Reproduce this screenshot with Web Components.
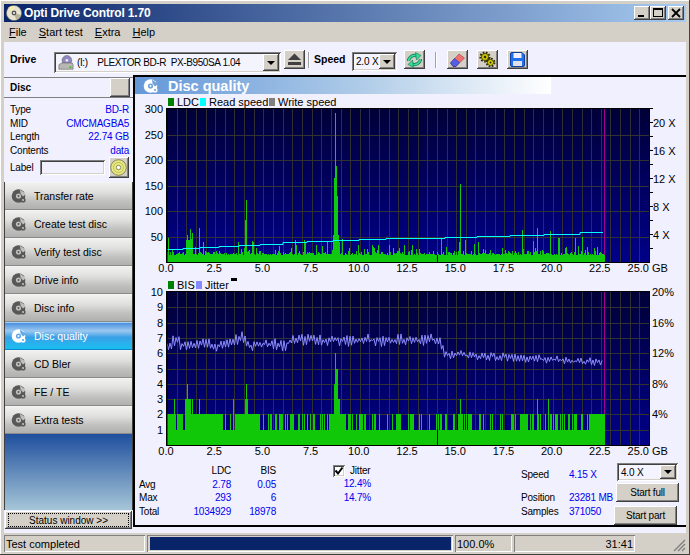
<!DOCTYPE html>
<html>
<head>
<meta charset="utf-8">
<title>Opti Drive Control</title>
<style>
  html, body { margin: 0; padding: 0; background: #d4d0c8; }
  body { font: 11px "Liberation Sans", Arial, sans-serif; color: #000; }
</style>
</head>
<body>
<odc-window>
  <odc-titlebar slot="title">Opti Drive Control 1.70</odc-titlebar>
  <odc-menubar slot="menu"></odc-menubar>
  <odc-toolbar slot="tools"></odc-toolbar>
  <odc-sidebar slot="side"></odc-sidebar>
  <odc-quality slot="main"></odc-quality>
  <odc-statusbar slot="status"></odc-statusbar>
</odc-window>

<script>
const BEVEL = "box-shadow: inset -1px -1px #404040, inset 1px 1px #fff, inset -2px -2px #808080, inset 2px 2px #d4d0c8;"
const SUNKEN = "box-shadow: inset 1px 1px #808080, inset -1px -1px #fff, inset 2px 2px #404040, inset -2px -2px #d4d0c8;"
const UI_FONT = `"Liberation Sans", Arial, sans-serif`

// disc with a bite taken out, used by the nav buttons and the header
const discIcon = (fill, hole) => `
  <svg width="16" height="16" viewBox="0 0 16 16">
    <circle cx="7.5" cy="8" r="6.8" fill="${fill}"/>
    <circle cx="7.5" cy="8" r="2.6" fill="${hole}"/>
    <circle cx="7.5" cy="8" r="1" fill="${fill}"/>
    <path d="M9 1.5 L15 6 L12 8.5 L9.5 5.5Z" fill="${hole}"/>
    <circle cx="12" cy="12" r="2.6" fill="${fill}"/>
    <circle cx="12" cy="12" r="1.1" fill="${hole}"/>
  </svg>`

function rng(seed) {
  return () => {
    seed = (seed + 0x6D2B79F5) | 0
    let t = Math.imul(seed ^ (seed >>> 15), 1 | seed)
    t = (t + Math.imul(t ^ (t >>> 7), 61 | t)) ^ t
    return ((t ^ (t >>> 14)) >>> 0) / 4294967296
  }
}

class OdcWindow extends HTMLElement {
  constructor() {
    super()
    this.attachShadow({mode: "open"})
    this.shadowRoot.innerHTML = `
      <style>
        :host {
          display: flex;
          flex-direction: column;
          box-sizing: border-box;
          width: 690px;
          height: 555px;
          padding: 4px 4px 3px;
          background: #d4d0c8;
          box-shadow: inset -1px -1px #404040, inset 1px 1px #fff;
          overflow: hidden;
        }
        .body { display: flex; height: 458px; background: #f0f0ff; }
      </style>
      <slot name="title"></slot>
      <slot name="menu"></slot>
      <slot name="tools"></slot>
      <div class="body">
        <slot name="side"></slot>
        <slot name="main"></slot>
      </div>
      <slot name="status"></slot>
    `
  }
}

class OdcTitlebar extends HTMLElement {
  constructor() {
    super()
    this.attachShadow({mode: "open"})
    this.shadowRoot.innerHTML = `
      <style>
        :host {
          display: flex;
          align-items: center;
          height: 18px;
          padding: 0 2px;
          background: linear-gradient(90deg, #0a246a, #a6caf0);
          color: #fff;
          font: bold 12px ${UI_FONT};
          letter-spacing: -.15px;
        }
        svg.app { margin-right: 2px; }
        .text { flex: 1; white-space: nowrap; }
        .btn {
          width: 16px; height: 14px;
          background: #d4d0c8;
          ${BEVEL}
          display: flex;
        }
        .btn:last-child { margin-left: 2px; }
        .btn svg { display: block; }
      </style>
      <svg class="app" width="16" height="16" viewBox="0 0 16 16">
        <circle cx="8" cy="8" r="7.6" fill="#e8e4d0" stroke="#6a6a60" stroke-width=".6"/>
        <path d="M8 8 L2 3 A7 7 0 0 1 8 1Z" fill="#f4efb0"/>
        <path d="M8 8 L15 10 A7 7 0 0 1 10 14.6Z" fill="#b8b49c"/>
        <circle cx="8" cy="8" r="2.4" fill="#555"/>
        <circle cx="8" cy="8" r="1" fill="#fff"/>
      </svg>
      <span class="text"><slot></slot></span>
      <span class="btn"><svg width="16" height="14"><rect x="4" y="9" width="6" height="2" fill="#000"/></svg></span>
      <span class="btn"><svg width="16" height="14"><rect x="3.5" y="2.5" width="9" height="8" fill="none" stroke="#000"/><rect x="3" y="2" width="10" height="2" fill="#000"/></svg></span>
      <span class="btn"><svg width="16" height="14"><path d="M4 3 L12 11 M12 3 L4 11" stroke="#000" stroke-width="1.8"/></svg></span>
    `
  }
}

class OdcMenubar extends HTMLElement {
  constructor() {
    super()
    this.attachShadow({mode: "open"})
    const items = [["F", "ile"], ["S", "tart test"], ["E", "xtra"], ["H", "elp"]]
    this.shadowRoot.innerHTML = `
      <style>
        :host {
          display: flex;
          gap: 12px;
          align-items: center;
          height: 20px;
          padding-left: 5px;
          font: 11px ${UI_FONT};
          background: #d4d0c8;
        }
      </style>
      ${items.map(([a, b]) => `<span><u>${a}</u>${b}</span>`).join("")}
    `
  }
}

class OdcCombo extends HTMLElement {
  constructor() {
    super()
    this.attachShadow({mode: "open"})
    this.shadowRoot.innerHTML = `
      <style>
        :host {
          display: flex;
          box-sizing: border-box;
          align-items: center;
          padding: 2px;
          background: #f4f4ff;
          ${SUNKEN}
          font: 10px ${UI_FONT};
          letter-spacing: -.2px;
        }
        .val { flex: 1; display: flex; align-items: center; padding-left: 2px; white-space: nowrap; overflow: hidden; }
        .arrow {
          width: 16px; align-self: stretch;
          background: #d4d0c8; ${BEVEL}
          display: flex; align-items: center; justify-content: center;
        }
        .arrow i { border: 4px solid transparent; border-top-color: #000; border-bottom: 0; }
      </style>
      <span class="val"><slot></slot></span>
      <span class="arrow"><i></i></span>
    `
  }
}

class OdcToolbar extends HTMLElement {
  constructor() {
    super()
    this.attachShadow({mode: "open"})
    this.shadowRoot.innerHTML = `
      <style>
        :host {
          display: flex;
          align-items: flex-start;
          height: 33px;
          padding-left: 6px;
          background: #f0f0ff;
          font: bold 10.5px ${UI_FONT};
        }
        b { display: block; margin-top: 11px; }
        .tb {
          width: 21px; height: 19px;
          margin-top: 8px;
          background: #d4d0c8;
          ${BEVEL}
          display: flex; align-items: center; justify-content: center;
        }
        .sep { width: 1px; height: 16px; margin-top: 10px; background: #a0a0a0; box-shadow: 1px 0 #fff; }
        odc-combo { margin-top: 10px; height: 21px; font-weight: normal; }
        .drive { width: 227px; margin-left: 15px; }
        .speed { width: 45px; height: 19px; margin-left: 8px; }
        .drive svg { margin-right: 3px; flex: none; }
        .dtext { white-space: pre; letter-spacing: -.4px; }
      </style>
      <b style="width:29px">Drive</b>
      <odc-combo class="drive">
        <svg width="16" height="16" viewBox="0 0 18 18">
          <circle cx="10" cy="6" r="5.5" fill="#9088c0" stroke="#555" stroke-width=".5"/>
          <circle cx="10" cy="6" r="1.5" fill="#eee"/>
          <path d="M1 11 L4 9 H16 L17 11 V16 H1Z" fill="#b8b8b0" stroke="#555" stroke-width=".6"/>
          <rect x="13" y="13" width="2" height="1.5" fill="#20b020"/>
        </svg>
        <span class="dtext">(I:)    PLEXTOR BD-R  PX-B950SA 1.04</span>
      </odc-combo>
      <span class="tb" style="margin-left:3px">
        <svg width="15" height="13" viewBox="0 0 15 13"><path d="M7.5 .5 L14 7 H1Z" fill="#404040"/><rect x="1" y="9" width="13" height="3" fill="#404040"/></svg>
      </span>
      <span class="sep" style="margin-left:3px"></span>
      <b style="margin-left:5px;width:30px">Speed</b>
      <odc-combo class="speed">2.0 X</odc-combo>
      <span class="tb" style="margin-left:7px">
        <svg width="17" height="16" viewBox="0 0 17 16">
          <path d="M2.5 9 A6 6 0 0 1 11 4" fill="none" stroke="#0e7a50" stroke-width="3.2"/>
          <path d="M2.5 9 A6 6 0 0 1 11 4" fill="none" stroke="#3ad89a" stroke-width="1.8"/>
          <path d="M9.5 .5 L15 3.5 L10.5 8Z" fill="#3ad89a" stroke="#0e7a50" stroke-width=".6"/>
          <path d="M14.5 7 A6 6 0 0 1 6 12" fill="none" stroke="#0e7a50" stroke-width="3.2"/>
          <path d="M14.5 7 A6 6 0 0 1 6 12" fill="none" stroke="#3ad89a" stroke-width="1.8"/>
          <path d="M7.5 15.5 L2 12.5 L6.5 8Z" fill="#3ad89a" stroke="#0e7a50" stroke-width=".6"/>
        </svg>
      </span>
      <span class="sep" style="margin-left:10px"></span>
      <span class="tb" style="margin-left:11px">
        <svg width="17" height="17" viewBox="0 0 17 17">
          <path d="M1.5 12 L10 3 L15.5 7 L7 15.5 L4 15.5Z" fill="#f07070" stroke="#803030" stroke-width=".5"/>
          <path d="M1.5 12 L5.5 7.5 L10.5 11.5 L7 15.5 L4 15.5Z" fill="#5060e8" stroke="#202080" stroke-width=".5"/>
        </svg>
      </span>
      <span class="tb" style="margin-left:9px">
        <svg width="17" height="17" viewBox="0 0 17 17">
          <circle cx="6" cy="6" r="4.4" fill="none" stroke="#2c2c00" stroke-width="2.4" stroke-dasharray="1.6 1.4"/>
          <circle cx="6" cy="6" r="3.6" fill="#c8c000" stroke="#2c2c00" stroke-width=".7"/>
          <circle cx="6" cy="6" r="1.2" fill="#2c2c00"/>
          <circle cx="11.5" cy="11.5" r="3.8" fill="none" stroke="#2c2c00" stroke-width="2.2" stroke-dasharray="1.6 1.4"/>
          <circle cx="11.5" cy="11.5" r="3" fill="#dcd400" stroke="#2c2c00" stroke-width=".7"/>
          <circle cx="11.5" cy="11.5" r="1" fill="#2c2c00"/>
        </svg>
      </span>
      <span class="tb" style="margin-left:9px">
        <svg width="15" height="15" viewBox="0 0 15 15">
          <path d="M.5 2 Q.5 .5 2 .5 H12 L14.5 3 V13 Q14.5 14.5 13 14.5 H2 Q.5 14.5 .5 13Z" fill="#2070f0" stroke="#1040a0"/>
          <rect x="3.5" y="1" width="8" height="5" fill="#f0f0ff"/>
          <rect x="3" y="9" width="9" height="5" fill="#e0e0e8"/>
        </svg>
      </span>
    `
  }
}

class OdcNavButton extends HTMLElement {
  constructor() {
    super()
    this.attachShadow({mode: "open"})
    const on = this.hasAttribute("active")
    this.shadowRoot.innerHTML = `
      <style>
        :host {
          display: flex;
          align-items: center;
          box-sizing: border-box;
          height: 28px;
          padding-left: 6px;
          gap: 7px;
          border-top: 1px solid ${on ? "#a0d0f8" : "#f4f4f4"};
          border-bottom: 1px solid ${on ? "#1080d0" : "#8a8a8a"};
          background: ${on
            ? "linear-gradient(#4a8fe0, #9cc8f0 30%, #3aa0e8 55%, #18c0f0)"
            : "linear-gradient(#f0f0ee, #e0e0de 35%, #c0c0be 70%, #b0b0ae)"};
          color: ${on ? "#fff" : "#000"};
          font: 10.5px ${UI_FONT};
        }
        svg { display: block; }
      </style>
      ${discIcon(on ? "#fff" : "#585858", on ? "#60a8e8" : "#c0c0be")}
      <span><slot></slot></span>
    `
  }
}

class OdcSidebar extends HTMLElement {
  constructor() {
    super()
    this.attachShadow({mode: "open"})
    const rows = [["Type", "BD-R"], ["MID", "CMCMAGBA5"], ["Length", "22.74 GB"], ["Contents", "data"]]
    const nav = ["Transfer rate", "Create test disc", "Verify test disc", "Drive info", "Disc info", "Disc quality", "CD Bler", "FE / TE", "Extra tests"]
    this.shadowRoot.innerHTML = `
      <style>
        :host {
          display: flex;
          flex-direction: column;
          width: 129px;
          padding-top: 2px;
          box-sizing: border-box;
          background: #f0f0ff;
          font: 10px ${UI_FONT};
        }
        .head {
          display: flex; justify-content: space-between; align-items: center;
          height: 21px; flex: none; box-sizing: border-box;
          border-top: 1px solid #808080;
          border-bottom: 1px solid #808080;
          padding-left: 6px;
          font-weight: bold;
        }
        .head span { width: 20px; height: 19px; margin-right: 3px; background: #d4d0c8; ${BEVEL} }
        .info { height: 84px; flex: none; box-sizing: border-box; padding: 5px 4px 0 6px; letter-spacing: -.2px; }
        .row { display: flex; justify-content: space-between; height: 13.5px; line-height: 13.5px; }
        .row em { font-style: normal; color: #0000f0; }
        .label { display: flex; align-items: center; }
        .label i { width: 67px; height: 15px; margin-left: 7px; box-sizing: border-box; background: #f0f0ff; ${SUNKEN} }
        .label span { width: 21px; height: 21px; margin-left: 4px; background: #d4d0c8; ${BEVEL} display: flex; align-items: center; justify-content: center; }
        .nav { border-left: 1px solid #404040; border-right: 1px solid #404040; flex: none; }
        .fill {
          height: 76px; flex: none;
          border-left: 1px solid #404040; border-right: 1px solid #404040;
          background: linear-gradient(#1f4f9e, #a6c6d8);
        }
        .status {
          height: 18px; flex: none; box-sizing: border-box;
          margin: 1px 1px 0;
          background: #d4d0c8; ${BEVEL}
          display: flex; align-items: center; justify-content: center;
          position: relative;
        }
        .status::after { content: ""; position: absolute; inset: 2px 3px; border: 1px dotted #000; }
      </style>
      <div class="head">Disc<span></span></div>
      <div class="info">
        ${rows.map(([a, b]) => `<div class="row"><span>${a}</span><em>${b}</em></div>`).join("")}
        <div class="label">Label<i></i><span>
          <svg width="17" height="17" viewBox="0 0 17 17">
            <circle cx="8.5" cy="8.5" r="7.8" fill="#e8e880" stroke="#606030" stroke-width=".7"/>
            <circle cx="8.5" cy="8.5" r="5" fill="none" stroke="#c0c060"/>
            <circle cx="8.5" cy="8.5" r="2.2" fill="#fff" stroke="#606030" stroke-width=".7"/>
          </svg></span></div>
      </div>
      <div class="nav">
        ${nav.map(n => `<odc-nav-button${n === "Disc quality" ? " active" : ""}>${n}</odc-nav-button>`).join("")}
      </div>
      <div class="fill"></div>
      <div class="status">Status window &gt;&gt;</div>
    `
  }
}

// one plot, coordinates in the svg are window pixels minus the origin below
class OdcChart extends HTMLElement {
  constructor() {
    super()
    this.attachShadow({mode: "open"})
    this.kind = this.getAttribute("kind")
    this.render()
  }

  render() {
    const ldc = this.kind === "ldc"
    const top = ldc ? 109 : 292, bottom = ldc ? 262 : 445
    const ox = 135, oy = ldc ? 95 : 278, height = ldc ? 183 : 182
    const left = 167, right = 649
    const gbX = gb => left + gb * (right - left) / 25
    let s = ""

    // grid
    for (let i = 1; i < 50; i++) {
      const x = Math.round(gbX(i / 2)) + .5
      s += `<path d="M${x} ${top}V${bottom}" stroke="#303032"/>`
    }
    const rows = ldc ? 6 : 10
    for (let i = 1; i < rows; i++) {
      const y = Math.round(bottom - i * (bottom - top) / rows) + .5
      s += `<path d="M${left} ${y}H${right}" stroke="#323230"/>`
    }
    s += `<path d="M604.5 ${top}V${bottom}" stroke="#a00090"/>`

    s += ldc ? this.ldcData(top, bottom) : this.bisData(top, bottom)

    // frame and ticks
    s += `<rect x="${left - .5}" y="${top - .5}" width="${right - left + 1}" height="${bottom - top + 1}" fill="none" stroke="#000"/>`
    s += `<path d="M${left} ${top}V${bottom}" stroke="#000"/>`

    // axis text
    for (let i = 0; i < 11; i++) {
      const gb = i * 2.5, x = gbX(gb)
      const anchor = i === 10 ? `text-anchor="end"` : `text-anchor="middle"`
      s += `<text x="${i === 10 ? right : x - 1}" y="${bottom + 10}" ${anchor}>${gb.toFixed(1)}</text>`
    }
    s += `<text x="652" y="${bottom + 10}">GB</text>`
    if (ldc) {
      for (let i = 1; i <= 6; i++) {
        s += `<text x="163" y="${Math.round(bottom - i * 25.5) + 4}" text-anchor="end">${i * 50}</text>`
      }
      for (let i = 1; i <= 11; i++) {
        const y = Math.round(bottom - i * 14) + .5
        s += `<path d="M649 ${y}h4" stroke="#000"/>`
        if (i <= 10 && i % 2 === 0) s += `<text x="653" y="${y + 4}">${i * 2} X</text>`
      }
    } else {
      for (let i = 1; i <= 10; i++) {
        const y = Math.round(bottom - i * 15.3)
        s += `<text x="163" y="${y + 4}" text-anchor="end">${i}</text>`
        if (i % 2 === 0) s += `<text x="652" y="${y + 4}">${i * 2}%</text>`
      }
    }

    // legend
    const items = ldc
      ? [[168, "#008000", "LDC"], [200, "#00ffff", "Read speed"], [269, "#808080", "Write speed"]]
      : [[168, "#008000", "BIS"], [196, "#8888ff", "Jitter"]]
    const ly = top - 11
    items.forEach(([x, c, t]) => {
      s += `<rect x="${x}" y="${ly}" width="6" height="8" fill="${c}"/><text x="${x + 9}" y="${ly + 8}">${t}</text>`
    })
    if (!ldc) s += `<rect x="231" y="278" width="6" height="3" fill="#000"/>`

    this.shadowRoot.innerHTML = `
      <style>
        :host { display: block; height: ${height}px; }
        svg { display: block; }
        text { font: 11px ${UI_FONT}; fill: #000; }
      </style>
      <svg width="551" height="${height}" viewBox="${ox} ${oy} 551 ${height}">
        <defs>
          <linearGradient id="sky" x1="0" y1="0" x2="0" y2="1">
            <stop offset="0" stop-color="#000038"/>
            <stop offset="1" stop-color="#000088"/>
          </linearGradient>
        </defs>
        <rect x="${left}" y="${top}" width="${right - left}" height="${bottom - top}" fill="url(#sky)"/>
        ${s}
      </svg>
    `
  }

  ldcData(top, bottom) {
    const r = rng(7)
    const spikes = [[168,238],[187,235],[188,240],[190,229],[191,239],[192,233],[199,228],[203,242],[238,242],[245,220],[246,200],
      [252,241],[253,242],[279,246],[295,240],[304,240],[305,242],[316,245],[322,246],[327,242],[334,178],[335,113],[336,166],[337,196],
      [339,242],[342,239],[349,248],[358,245],[374,248],[378,245],[393,248],[399,248],[404,245],[412,245],[441,238],[446,247],
      [459,242],[460,184],[465,240],[474,244],[478,245],[483,249],[502,248],[522,230],[533,241],[537,228],[542,250],[550,231],
      [558,238],[559,238],[565,248],[575,238],[582,237],[594,248],[600,252],[186,240],[189,240],[333,235],[338,235]]
    const tops = {}
    for (let x = 167; x <= 604; x++) {
      let h = 6.5 + r() * 2.5
      if (r() < .3) h += 1 + r() * 3
      if (r() < .06) h += 3 + r() * 6
      tops[x] = bottom - Math.round(h)
    }
    for (const [x, y] of spikes) tops[x] = Math.min(tops[x], y)
    let d = ""
    for (const x in tops) d += `M${+x + .5} ${bottom}V${tops[x]}`
    let out = `<path d="${d}" stroke="#10c810"/><path d="M437.5 255V262" stroke="#000"/>`

    // read speed steps
    const steps = [[167,249],[183,248],[200,247],[219,246],[239,245],[260,244],[283,242],[307,241],[333,240],[359,239],[386,238],
      [445,237],[477,236],[510,235],[544,234],[580,232]]
    let p = `M167 ${steps[0][1] + .5}`
    steps.forEach(([x, y]) => { p += `H${x}V${y + .5}` })
    p += "H603"
    return out + `<path d="${p}" fill="none" stroke="#00ffff"/>`
  }

  bisData(top, bottom) {
    const r = rng(21)
    const lvl = n => Math.round(bottom - n * 15.3)
    let d = ""
    const bar = (x, w, n) => {
      for (let i = 0; i < w; i++) d += `M${x + i + .5} ${bottom}V${lvl(n)}`
    }
    bar(167, 438, 1)
    // level 2: solid blocks, then thin stripes between
    const solid = [[167,9],[177,6],[185,25],[210,13],[235,18],[254,6],[329,17],[591,14],[520,8],[440,2],[410,3],[396,4],[360,3]]
    solid.forEach(([x, w]) => bar(x, w, 2))
    for (let x = 223; x < 591; x++) {
      if (r() < .38) { bar(x, r() < .3 ? 2 : 1, 2); x += 1 }
    }
    const three = [[174,1],[185,5],[190,1],[192,1],[199,1],[233,1],[245,3],[335,5],[460,1],[537,1],[548,1]]
    three.forEach(([x, w]) => bar(x, w, 3))
    bar(187, 1, 4); bar(246, 1, 4); bar(334, 4, 4)
    bar(335, 3, 5); bar(335, 1, 6)

    // jitter trace
    const base = [[167,6.4],[175,6.9],[177,6.9],[180,6.55],[230,6.55],[238,7.0],[243,7.1],[250,6.4],[262,6.65],[285,6.5],[292,6.85],[440,6.85],
      [444,5.95],[470,5.85],[520,5.7],[560,5.55],[603,5.4]]
    const at = x => {
      for (let i = 1; i < base.length; i++) {
        if (x <= base[i][0]) {
          const [x0, y0] = base[i - 1], [x1, y1] = base[i]
          return y0 + (y1 - y0) * (x - x0) / (x1 - x0)
        }
      }
      return 5.4
    }
    const pts = []
    for (let x = 167, flip = 1; x <= 603; x += 1.5, flip = -flip) {
      const amp = x < 444 ? .42 : .3
      const v = at(x) + flip * r() * amp
      pts.push(`${x},${(bottom - v * 15.3).toFixed(1)}`)
    }
    return `<path d="${d}" stroke="#10c808"/><path d="M437.5 429V445" stroke="#000"/>
      <polyline points="${pts.join(" ")}" fill="none" stroke="#8c8cff"/>`
  }
}

class OdcQuality extends HTMLElement {
  constructor() {
    super()
    this.attachShadow({mode: "open"})
    this.shadowRoot.innerHTML = `
      <style>
        :host {
          display: flex;
          flex-direction: column;
          width: 553px;
          box-sizing: border-box;
          height: 452px;
          border-top: 2px solid #000;
          border-left: 2px solid #000;
          border-bottom: 2px solid #000;
          background: #f0f0ff;
          font: 10px ${UI_FONT};
        }
        .head {
          display: flex; align-items: center;
          height: 17px; margin: 0 0 1px; width: 416px; flex: none;
          background: linear-gradient(90deg, #6498d8, #b0cce8 55%, #fff);
          color: #fff; font: bold 14.5px/16px ${UI_FONT};
          padding-left: 8px; box-sizing: border-box; gap: 9px;
        }
        .head svg { flex: none; }
        .stats { display: flex; flex: 1; padding-left: 4px; letter-spacing: -.2px; }
        table { border-collapse: collapse; margin-top: 4px; height: 54px; }
        td { padding: 0; text-align: right; color: #0000f0; line-height: 13.5px; }
        td.h { color: #000; }
        td:first-child { text-align: left; color: #000; width: 48px; }
        td:nth-child(2) { width: 44px; }
        td:nth-child(3) { width: 45px; }
        .jit { width: 95px; margin-top: 5px; color: #0000f0; text-align: right; line-height: 13.5px; }
        .chk { display: flex; align-items: center; gap: 5px; padding-left: 57px; color: #000; height: 12px; }
        .chk i { width: 12px; height: 12px; flex: none; background: #fff; box-sizing: border-box; ${SUNKEN} display: flex; }
        .side { margin-left: 150px; margin-top: 8px; width: 92px; }
        .side div { display: flex; line-height: 13.5px; }
        .side span { width: 48px; flex: none; }
        .side em { font-style: normal; color: #0000f0; white-space: nowrap; }
        .btns { display: flex; flex-direction: column; margin-left: 1px; margin-top: 3px; width: 66px; }
        odc-combo { width: 61px; height: 18px; margin-left: 3px; }
        .go { width: 63px; height: 19px; background: #d4d0c8; ${BEVEL} display: flex; align-items: center; justify-content: center; color: #000; margin: 2px 0 0 2px; }
        .go.b { margin: 4px 0 0 0; }
      </style>
      <div class="head">${discIcon("#fff", "#6ea0dc")}<span>Disc quality</span></div>
      <odc-chart kind="ldc"></odc-chart>
      <odc-chart kind="bis"></odc-chart>
      <div class="stats">
        <table>
          <tr><td></td><td class="h">LDC</td><td class="h">BIS</td></tr>
          <tr><td>Avg</td><td>2.78</td><td>0.05</td></tr>
          <tr><td>Max</td><td>293</td><td>6</td></tr>
          <tr><td>Total</td><td>1034929</td><td>18978</td></tr>
        </table>
        <div class="jit">
          <div class="chk"><i><svg width="12" height="12"><path d="M2.5 5.5 L5 8.5 L9.5 2.5" fill="none" stroke="#000" stroke-width="2"/></svg></i><span>Jitter</span></div>
          <div>12.4%</div>
          <div>14.7%</div>
        </div>
        <div class="side">
          <div><span>Speed</span><em>4.15 X</em></div>
          <div style="height:9.5px"></div>
          <div><span>Position</span><em>23281 MB</em></div>
          <div><span>Samples</span><em>371050</em></div>
        </div>
        <div class="btns">
          <odc-combo>4.0 X</odc-combo>
          <div class="go">Start full</div>
          <div class="go b">Start part</div>
        </div>
      </div>
    `
  }
}

class OdcStatusbar extends HTMLElement {
  constructor() {
    super()
    this.attachShadow({mode: "open"})
    this.shadowRoot.innerHTML = `
      <style>
        :host {
          display: flex;
          gap: 2px;
          height: 19px;
          box-sizing: border-box;
          padding: 2px 0 0;
          background: #d4d0c8;
          font: 11px ${UI_FONT};
        }
        div { box-sizing: border-box; box-shadow: inset 1px 1px #808080, inset -1px -1px #fff; display: flex; align-items: center; padding: 0 2px; white-space: nowrap; }
        .msg { width: 141px; }
        .bar { width: 306px; padding: 2px 2px 2px 3px; }
        .bar i { display: block; width: 100%; height: 100%; background: #0a246a; }
        .pct { width: 57px; }
        .time { width: 121px; justify-content: flex-end; }
        svg { margin-left: auto; align-self: flex-end; }
      </style>
      <div class="msg">Test completed</div>
      <div class="bar"><i></i></div>
      <div class="pct">100.0%</div>
      <div class="time">31:41</div>
      <svg width="14" height="14" viewBox="0 0 14 14"><path d="M13 2 L2 13 M13 6 L6 13 M13 10 L10 13" stroke="#808080" stroke-width="1.4"/></svg>
    `
  }
}

customElements.define("odc-window", OdcWindow)
customElements.define("odc-titlebar", OdcTitlebar)
customElements.define("odc-menubar", OdcMenubar)
customElements.define("odc-combo", OdcCombo)
customElements.define("odc-toolbar", OdcToolbar)
customElements.define("odc-nav-button", OdcNavButton)
customElements.define("odc-sidebar", OdcSidebar)
customElements.define("odc-chart", OdcChart)
customElements.define("odc-quality", OdcQuality)
customElements.define("odc-statusbar", OdcStatusbar)
</script>
</body>
</html>
